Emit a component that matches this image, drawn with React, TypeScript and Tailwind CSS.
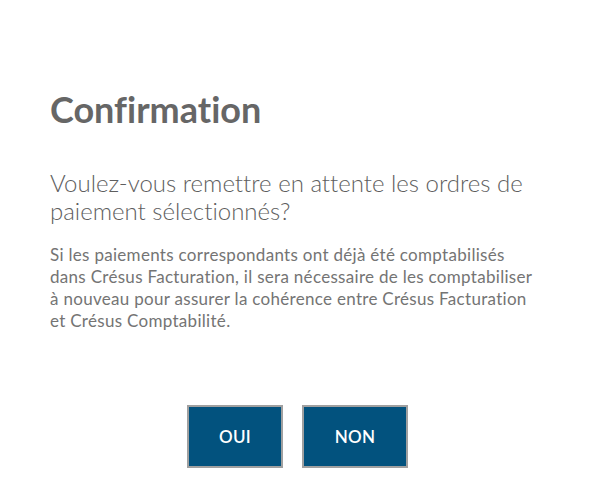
export default function App() {
  return (
    <div
      className="w-[595px] h-[478px] bg-white px-[50px] pt-[87px] text-[#666666] [font-variant-ligatures:none]"
      style={{ fontFamily: 'Lato, "Open Sans", sans-serif' }}
    >
      <h1 className="text-[36px] font-bold leading-[44px] text-[#666666]">Confirmation</h1>
      <p className="mt-[38px] text-[24px] font-light leading-[28px] text-[#5e5e5e]">
        Voulez-vous remettre en attente les ordres de paiement sélectionnés?
      </p>
      <p className="mt-[19px] text-[17px] leading-[22px] tracking-[0.3px] text-[#747474]">
        Si les paiements correspondants ont déjà été comptabilisés dans Crésus Facturation, il sera
        nécessaire de les comptabiliser à nouveau pour assurer la cohérence entre Crésus Facturation
        et Crésus Comptabilité.
      </p>
      <div className="mt-[73px] flex justify-center gap-[19px]">
        <button className="w-[96px] h-[63px] bg-[#02527e] border-2 border-[#a0a0a0] text-white text-[17px] font-semibold tracking-[0.3px]">
          OUI
        </button>
        <button className="w-[106px] h-[63px] bg-[#02527e] border-2 border-[#a0a0a0] text-white text-[17px] font-semibold tracking-[0.3px]">
          NON
        </button>
      </div>
    </div>
  )
}
